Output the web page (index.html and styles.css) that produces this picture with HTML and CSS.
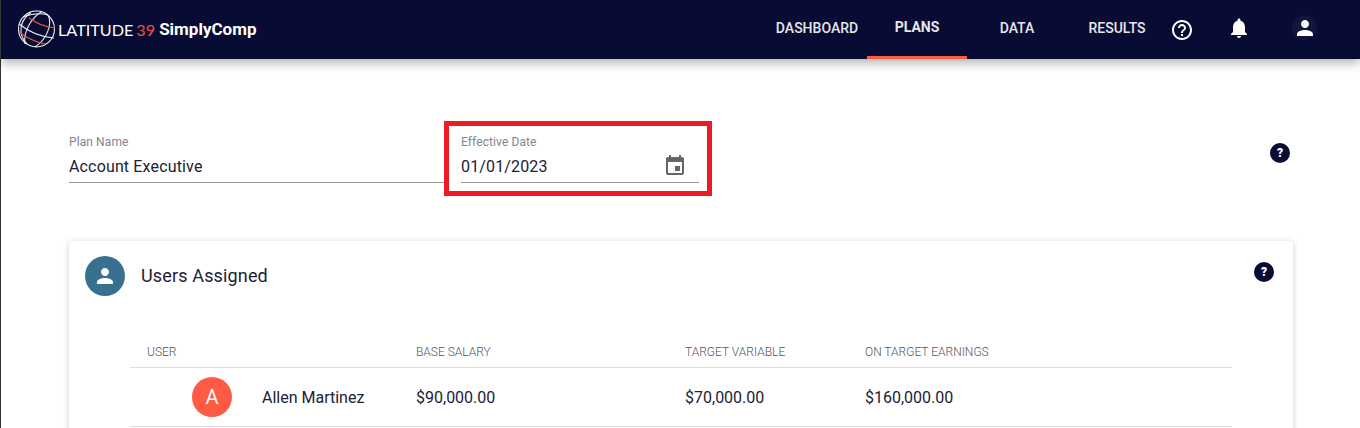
FILE: index.html
```html
<!DOCTYPE html>
<html lang="en">

<head>
  <meta charset="UTF-8">
  <title>SimplyComp</title>
  <link rel="stylesheet" href="styles.css">
</head>

<body>
  <header class="topbar">
    <div class="brand">
      <svg class="globe" width="40" height="40" viewBox="0 0 40 40" fill="none" stroke="#eceef4" stroke-width="1.1">
        <circle cx="19.500" cy="19" r="18"/>
        <path d="M25 1.500C14 8 6 22 8 34"/>
        <path d="M31 5C36 15 29 30 18 37"/>
        <path d="M14 2.500C3 10 0 24 10 34"/>
        <path d="M2 14C12 22 24 27 37 28"/>
        <path d="M6 7C14 4 24 3 31 5"/>
        <path class="globe-red" d="M12 8C20 14 28 17 38 18"/>
        <path class="globe-red" d="M2 22C10 28 18 32 28 34"/>
      </svg>
      <span class="brand-name">LATITUDE</span>
      <span class="brand-num">39</span>
      <span class="brand-product">SimplyComp</span>
    </div>
    <nav class="tabs">
      <a class="tab">DASHBOARD</a>
      <a class="tab active">PLANS</a>
      <a class="tab">DATA</a>
      <a class="tab">RESULTS</a>
    </nav>
    <div class="tools">
      <svg class="tool tool-help" width="24" height="24" viewBox="0 0 24 24" fill="#fff"><path d="M11 18h2v-2h-2v2zm1-16C6.480 2 2 6.480 2 12s4.480 10 10 10 10-4.480 10-10S17.520 2 12 2zm0 18c-4.410 0-8-3.590-8-8s3.590-8 8-8 8 3.590 8 8-3.590 8-8 8zm0-14c-2.210 0-4 1.790-4 4h2c0-1.100.9-2 2-2s2 .9 2 2c0 2-3 1.750-3 5h2c0-2.250 3-2.500 3-5 0-2.210-1.790-4-4-4z"/></svg>
      <svg class="tool tool-bell" width="24" height="24" viewBox="0 0 24 24" fill="#fff"><path d="M12 22c1.100 0 2-.9 2-2h-4c0 1.100.9 2 2 2zm6-6v-5c0-3.070-1.630-5.640-4.500-6.320V4c0-.83-.67-1.500-1.500-1.500s-1.500.67-1.500 1.500v.68C7.640 5.360 6 7.920 6 11v5l-2 2v1h16v-1l-2-2z"/></svg>
      <span class="tool-user">
        <svg width="24" height="24" viewBox="0 0 24 24" fill="#fff"><path d="M12 12c2.210 0 4-1.790 4-4s-1.790-4-4-4-4 1.790-4 4 1.790 4 4 4zm0 2c-2.670 0-8 1.340-8 4v2h16v-2c0-2.660-5.330-4-8-4z"/></svg>
      </span>
    </div>
  </header>

  <main class="page">
    <div class="plan-form">
      <div class="field field-name">
        <label class="field-label">Plan Name</label>
        <div class="field-value">Account Executive</div>
      </div>
      <div class="highlight">
        <div class="field field-date">
          <label class="field-label">Effective Date</label>
          <div class="field-value">
            01/01/2023
            <svg class="date-icon" width="24" height="24" viewBox="0 0 24 24" fill="#666"><path d="M17 12h-5v5h5v-5zM16 1v2H8V1H6v2H5c-1.110 0-1.990.9-1.990 2L3 19c0 1.100.89 2 2 2h14c1.100 0 2-.9 2-2V5c0-1.100-.9-2-2-2h-1V1h-2zm3 18H5V8h14v11z"/></svg>
          </div>
        </div>
      </div>
      <span class="help help-form">?</span>
    </div>

    <section class="card">
      <div class="card-head">
        <span class="card-icon">
          <svg width="24" height="24" viewBox="0 0 24 24" fill="#fff"><path d="M12 12c2.210 0 4-1.790 4-4s-1.790-4-4-4-4 1.790-4 4 1.790 4 4 4zm0 2c-2.670 0-8 1.340-8 4v2h16v-2c0-2.660-5.330-4-8-4z"/></svg>
        </span>
        <h2 class="card-title">Users Assigned</h2>
        <span class="help help-card">?</span>
      </div>
      <div class="users">
        <div class="users-row users-header">
          <span class="col-user">USER</span>
          <span class="col-base">BASE SALARY</span>
          <span class="col-target">TARGET VARIABLE</span>
          <span>ON TARGET EARNINGS</span>
        </div>
        <div class="users-row">
          <span class="col-user user-cell">
            <span class="avatar">A</span>
            Allen Martinez
          </span>
          <span class="col-base">$90,000.00</span>
          <span class="col-target">$70,000.00</span>
          <span>$160,000.00</span>
        </div>
      </div>
    </section>
  </main>
</body>

</html>
```

FILE: styles.css
```css
* {
  margin: 0;
  padding: 0;
  box-sizing: border-box;

  font-family: Roboto, "Liberation Sans", sans-serif;
}

html,
body {
  height: 100%;
  overflow: hidden;
}

body {
  background-color: #fff;
  color: #212135;
  border-left: 1px solid #333;
}

.topbar {
  position: relative;
  z-index: 1;

  display: flex;
  align-items: center;

  height: 59px;
  padding-left: 16px;

  background-color: #080b33;
  box-shadow: 0 4px 10px rgba(0, 0, 0, 0.3);
}

.brand {
  display: flex;
  align-items: center;
  color: #fff;
}

.globe {
  margin-right: 1px;
}

.globe-red {
  stroke: #e8563f;
}

.brand-name {
  font-family: Lato, sans-serif;
  font-weight: 400;
  font-size: 16.2px;
}

.brand-num {
  margin-left: 3px;
  color: #e8563f;

  font-family: Lato, sans-serif;
  font-weight: 400;
  font-size: 16.2px;
}

.brand-product {
  margin-left: 4px;
  padding-bottom: 1px;
  font-size: 17px;
  font-weight: 700;
}

.tabs {
  display: flex;
  margin-left: auto;
}

.tab {
  display: flex;
  align-items: center;
  justify-content: center;

  width: 100px;
  height: 59px;
  padding-bottom: 4px;

  color: #e6e6eb;
  font-size: 14px;
  font-weight: 500;
}

.tab.active {
  padding-bottom: 2px;
  border-bottom: 3px solid #ff5a43;

  font-weight: 700;
}

.tools {
  display: flex;
  align-items: center;
  margin-left: 3px;
  margin-right: 43px;
}

.tool-bell {
  margin-left: 33px;
  margin-bottom: 3px;
}

.tool-user {
  display: flex;
  align-items: center;
  justify-content: center;

  width: 25px;
  height: 25px;
  margin-left: 41px;
  margin-bottom: 4px;

  background-color: #12153b;
  border-radius: 50%;
}

.page {
  height: 369px;
  padding: 62px 67px 0 68px;
  overflow: hidden;
}

.plan-form {
  display: flex;
  align-items: flex-start;
}

.field {
  height: 62px;
  padding-top: 14px;
  border-bottom: 1px solid #949494;
}

.field-name {
  width: 375px;
}

.highlight {
  width: 268px;
  height: 75px;
  padding: 0 8px 0 12px;
  border: 5px solid #ed1c24;
}

.field-date {
  height: 57px;
  padding-top: 9px;
}

.field-label {
  display: block;

  color: #84848e;
  font-size: 12px;
  line-height: 14px;
  letter-spacing: .1px;
}

.field-value {
  display: flex;
  align-items: center;
  justify-content: space-between;

  height: 24px;
  margin-top: 5px;

  font-size: 16px;
  letter-spacing: .15px;
}

.date-icon {
  margin-right: 12px;
}

.help {
  display: flex;
  align-items: center;
  justify-content: center;

  width: 20px;
  height: 20px;

  background-color: #080b33;
  border-radius: 50%;
  color: #fff;

  font-size: 12px;
  font-weight: 900;
}

.help-form {
  margin-left: auto;
  margin-top: 22px;
  margin-right: 3px;
}

.card {
  height: 300px;
  margin-top: 45px;
  padding: 15px 16px;

  border-radius: 4px;
  box-shadow: 0 1px 6px rgba(0, 0, 0, 0.2);
}

.card-head {
  display: flex;
  align-items: center;
}

.card-icon {
  display: flex;
  align-items: center;
  justify-content: center;

  width: 40px;
  height: 40px;

  background-color: #38708f;
  border-radius: 50%;
}

.card-title {
  margin-left: 16px;
  padding-bottom: 2px;

  font-size: 18px;
  font-weight: 400;
  letter-spacing: .15px;
}

.help-card {
  margin-left: auto;
  margin-right: 3px;
  margin-top: -8px;
}

.users {
  margin: 41px 45px 0;
}

.users-row {
  display: flex;
  align-items: center;

  height: 59px;
  border-bottom: 1px solid #ddd;

  font-size: 16px;
}

.users-header {
  height: 31px;

  color: #555560;
  font-size: 12px;
  font-weight: 300;
}

.col-user {
  width: 286px;
  padding-left: 17px;
}

.col-base {
  width: 269px;
}

.col-target {
  width: 180px;
}

.user-cell {
  display: flex;
  align-items: center;
  padding-left: 62px;
}

.avatar {
  display: flex;
  align-items: center;
  justify-content: center;

  width: 40px;
  height: 40px;
  margin-right: 30px;

  background-color: #ff5a43;
  border-radius: 50%;
  color: #fff;

  font-size: 20px;
}
```
